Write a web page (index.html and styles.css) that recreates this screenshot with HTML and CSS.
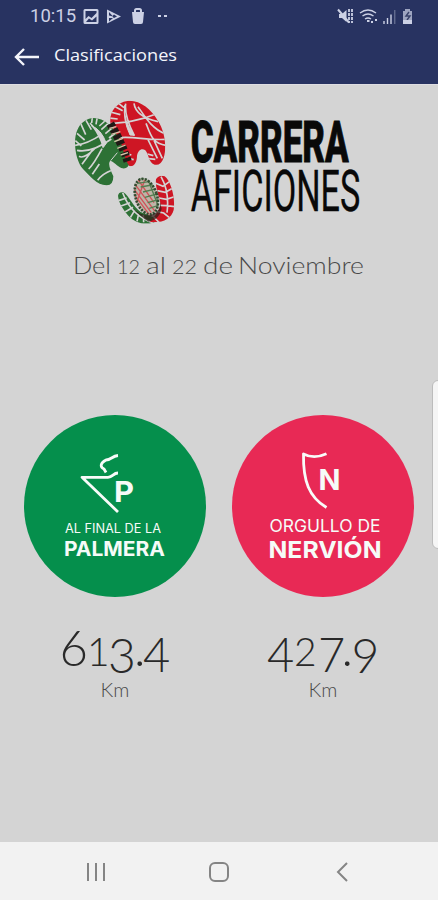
FILE: index.html
```html
<!DOCTYPE html>
<html lang="es">
<head>
<meta charset="utf-8">
<title>Clasificaciones</title>
<link rel="stylesheet" href="styles.css">
</head>
<body>
<div class="screen">
  <header class="top">
    <div class="status">
      <span class="clock">10:15</span>
      <svg class="notifications" width="88" height="20" viewBox="0 0 88 20">
        <path fill="currentColor" fill-rule="evenodd" d="M3 3h12q1.500 0 1.500 1.500v12q0 1.500-1.500 1.500H3q-1.500 0-1.500-1.500v-12Q1.500 3 3 3zM3.500 5v8l3-3 3 2 5-5V5zM4 16h10.500v-5.500l-4.500 4-3-2z"/>
        <path fill="currentColor" fill-rule="evenodd" d="M25 3.500 39 10.500 25 17.500zM27 6v3.500l4 1zM27 12v3.500l4-3.500zM32 8.500l-2 2 2 1.500 3-1.500z"/>
        <path fill="currentColor" d="M50 6h12l-1 10q0 2-2 2h-6q-2 0-2-2z"/>
        <path class="line" d="M53 7V4.500q0-1.500 1.500-1.500h3q1.500 0 1.500 1.500V7"/>
        <path fill="currentColor" d="M76 9h3v2h-3zM82 9h3v2h-3z"/>
      </svg>
      <svg class="signals" width="78" height="20" viewBox="0 0 78 20">
        <path fill="currentColor" d="M3 8h3l4.500-4v12L6 12H3z"/>
        <path class="line" d="M2 3.500 13 16.500"/>
        <path class="line dashed" d="M13 3v14M16 3v14"/>
        <path class="line thin" d="M24 7q8-6 16 0M26.500 10q5.500-4 11 0M29 13q3-2 6 0"/>
        <path fill="currentColor" d="M31 14h2.500v2H31zM35 15h2v2h-2zM39 13h2v2h-2z"/>
        <path class="line thin" d="M48 15v3M51.500 12v6M55 8.500V18"/>
        <path class="line faint" d="M58.800 4v14"/>
        <path fill="currentColor" opacity=".72" d="M67 5h2V3h5v2h2v13h-9z"/>
        <path class="bolt" d="m73 6-3 4h4l-3 4"/>
        <path fill="currentColor" d="M67 14h9v4h-9z"/>
      </svg>
    </div>
    <div class="bar">
      <svg width="26" height="20" viewBox="0 0 26 20"><path class="arrow" d="M25 10H2M10 2 2 10l8 8"/></svg>
      <h1><svg width="126" height="24" viewBox="0 0 126 24"><text x="1" y="16" textLength="123" lengthAdjust="spacingAndGlyphs">Clasificaciones</text></svg></h1>
    </div>
  </header>

  <main class="content">
    <svg class="logo" width="310" height="135" viewBox="0 0 930 405">
      <defs>
        <clipPath id="green-sole"><path d="M62 78C82 62 112 68 132 86C160 110 188 158 198 200Q192 225 172 219C160 214 149 199 139 197C130 207 140 226 148 244Q148 272 127 271C99 270 78 244 57 222C34 196 26 136 40 105Q47 87 62 78Z"/></clipPath>
        <clipPath id="red-sole"><path d="M139 84C136 49 158 23 190 18C226 14 261 42 282 78C303 109 309 159 299 188Q290 213 272 209C254 204 255 179 244 166C233 157 222 166 219 182C219 203 209 217 196 213C179 190 180 158 164 130Z"/></clipPath>
        <clipPath id="small-green"><path d="M162 302Q164 290 178 292C195 302 208 337 230 351L286 374C256 393 218 389 193 362C176 342 164 323 162 302Z"/></clipPath>
        <clipPath id="small-red"><path d="M276 253Q285 238 302 244C320 257 335 309 329 345C322 372 296 385 258 381C268 365 296 343 287 314C280 291 274 273 276 253Z"/></clipPath>
        <clipPath id="small-mid"><ellipse cx="247" cy="305" rx="34" ry="57" transform="rotate(-18 247 305)"/></clipPath>
      </defs>
      <g clip-path="url(#green-sole)">
        <path fill="#2d7135" d="M20 50h190v240H20z"/>
        <path class="tread" d="M78 84C94 99 109 130 119 155M33 151C61 148 85 137 113 118M39 166C69 172 107 157 142 132M45 184C58 192 76 177 92 161M74 222C88 209 99 189 114 161M101 256C111 242 127 232 143 226M50 85l15 34M66 76l16 28M39 115l23 20M34 137l18 16M54 208l32-44M85 238l21-31M132 86l-20 18M142 101l-18 15M126 75l-20 18M100 66l-4 22M85 67l-2 17M153 115l-18 14"/>
        <path class="tread wide" d="M82 92Q110 113 117 158L127 145Q112 103 82 92ZM140 197l20-24"/>
      </g>
      <g clip-path="url(#red-sole)">
        <path fill="#ce1624" d="M125 0h190v230H125z"/>
        <path class="tread" d="M137 86C174 83 218 81 276 57M153 130C198 120 245 137 306 133M185 26C181 57 193 87 211 122M210 25C214 55 242 71 282 80M222 35C243 65 263 101 303 116M246 85C258 113 263 146 306 151M251 132l29 58M270 136l25 54M202 180l-20-6M209 194l-19-4M250 177l18 5M254 191l20 2M139 51l30 8M151 34l25 13M161 23l19 15M136 69l25 3"/>
        <path class="tread wide" d="M182 31Q177 79 211 121L198 120Q176 73 182 31Z"/>
      </g>
      <path class="overlap" d="M139 86Q171 139 191 199"/>
      <path class="overlap-cuts" d="M136 100l21-5M142 118l27-8M151 140l26-10M160 160l25-10M170 180l22-7"/>
      <g clip-path="url(#small-green)">
        <path fill="#2d7135" d="M155 280h145v115H155z"/>
        <path class="tread" d="M163 317l25-8M171 333l27-10M183 351l24-14M199 368l13-22M219 379l5-23M239 382l-1-22M176 293q25 68 92 91"/>
      </g>
      <g clip-path="url(#small-red)">
        <path fill="#ce1624" d="M250 235h90v155h-90z"/>
        <path class="tread" d="M291 245q26 45 18 108M275 265l22 9 20-15M280 287l24 5 23-13M285 309l22 4 24-8M287 331l19 1 26 3M280 350l19 4 20 16M269 366l20 20"/>
      </g>
      <g clip-path="url(#small-mid)">
        <path fill="#bdb5a7" d="M200 240h100v125H200z"/>
        <path class="mesh red" d="M207 278l55 75M211 265l62 84M213 302l43 57M222 254l48 69M214 333l28-77"/>
        <path class="mesh green" d="M218 251h33l38 98M220 265l54-8M230 276l50-9M237 291l50-12M243 307l48-14M251 323l39-11M256 340l36-12"/>
      </g>
      <ellipse class="mid-edge" cx="247" cy="305" rx="32" ry="55" transform="rotate(-18 247 305)"/>
      <path class="dark" d="M204 337q32 34 65 19 23-10 19-36l5 22q-8 33-39 38-26-15-50-43z"/>
      <text class="name heavy" x="380" y="201" textLength="474" lengthAdjust="spacingAndGlyphs">CARRERA</text>
      <text class="name" x="380" y="348" textLength="509" lengthAdjust="spacingAndGlyphs">AFICIONES</text>
    </svg>

    <svg class="dates" width="300" height="36" viewBox="0 0 300 36">
      <text y="25"><tspan x="4" textLength="38" lengthAdjust="spacingAndGlyphs">Del</tspan><tspan class="old" x="48" textLength="23" lengthAdjust="spacingAndGlyphs">12</tspan><tspan x="77" textLength="20" lengthAdjust="spacingAndGlyphs">al</tspan><tspan class="old" x="103" textLength="25" lengthAdjust="spacingAndGlyphs">22</tspan><tspan x="134" textLength="30" lengthAdjust="spacingAndGlyphs">de</tspan><tspan x="169" textLength="126" lengthAdjust="spacingAndGlyphs">Noviembre</tspan></text>
    </svg>

    <section class="teams">
      <article class="team">
        <svg class="badge palmera" width="182" height="182" viewBox="0 0 182 182">
          <path class="stroke" d="M94 40.500C88 41 87 45 82 45C76 48 76 52 80 54L82 57.500M94 58C89 58 89 62.300 84 62.300H58L94 97"/>
          <text class="strong" x="90" y="87" font-size="29" textLength="20" lengthAdjust="spacingAndGlyphs">P</text>
          <text x="41" y="117.500" font-size="13.500" textLength="96" lengthAdjust="spacingAndGlyphs">AL FINAL DE LA</text>
          <text class="strong" x="40" y="140.500" font-size="20" textLength="101" lengthAdjust="spacingAndGlyphs">PALMERA</text>
        </svg>
        <svg class="score" width="182" height="54" viewBox="0 0 182 54">
          <text><tspan x="35.500" y="46" font-size="49">6</tspan><tspan x="63" y="46" font-size="39">1</tspan><tspan x="84" y="52.500" font-size="48">3</tspan><tspan x="110" y="46" font-size="49">.</tspan><tspan x="119" y="52" font-size="47">4</tspan></text>
        </svg>
        <div class="unit">Km</div>
      </article>
      <article class="team">
        <svg class="badge nervion" width="182" height="182" viewBox="0 0 182 182">
          <path class="stroke" d="M94.500 38.800Q82 44.500 71.500 39C71 66 77 82 94.500 92.500"/>
          <text class="strong" x="86.500" y="74.500" font-size="29" textLength="22" lengthAdjust="spacingAndGlyphs">N</text>
          <text x="37.500" y="117" font-size="17.500" textLength="111" lengthAdjust="spacingAndGlyphs">ORGULLO DE</text>
          <text class="strong" x="36.500" y="143.300" font-size="23.500" textLength="113" lengthAdjust="spacingAndGlyphs">NERVIÓN</text>
        </svg>
        <svg class="score" width="182" height="54" viewBox="0 0 182 54">
          <text><tspan x="35" y="52" font-size="47">4</tspan><tspan x="62" y="46" font-size="39">2</tspan><tspan x="86" y="52" font-size="47">7</tspan><tspan x="109.500" y="46" font-size="49">.</tspan><tspan x="119.500" y="52.500" font-size="48">9</tspan></text>
        </svg>
        <div class="unit">Km</div>
      </article>
    </section>
    <div class="edge-handle"></div>
  </main>

  <nav class="nav">
    <svg width="20" height="20" viewBox="0 0 20 20"><path d="M2 1v18M10 1v18M18 1v18"/></svg>
    <svg width="20" height="20" viewBox="0 0 20 20"><rect x="1" y="1" width="18" height="18" rx="5"/></svg>
    <svg width="20" height="20" viewBox="0 0 20 20"><path d="M15 1 6 10l9 9"/></svg>
  </nav>
</div>
</body>
</html>
```
FILE: styles.css
```css
* { box-sizing: border-box; }
body { margin: 0; background: #d4d4d4; font-family: Lato, "Open Sans", sans-serif; }
svg { display: block; flex: none; }
.screen { width: 438px; height: 900px; display: flex; flex-direction: column; overflow: hidden; }

.top { height: 84px; flex: none; background: #283361; color: #ccd1e5; }
.status { height: 30px; display: flex; align-items: center; padding: 2px 24px 0 30px; }
.clock { width: 52px; font: 400 18.5px/22px Roboto, sans-serif; }
.signals { margin-left: auto; }
.line { fill: none; stroke: currentColor; stroke-width: 2; }
.thin { stroke-width: 1.4; }
.faint { stroke-width: 1; opacity: .5; }
.dashed { stroke-dasharray: 3 1; stroke-width: 1.8; }
.bolt { fill: none; stroke: #384269; stroke-width: 1.4; }
.bar { height: 54px; display: flex; align-items: center; gap: 13px; padding: 0 14px; color: #f4f5fb; }
.bar h1 { margin: 0; font: 500 17px/24px "Open Sans", sans-serif; }
.bar text { fill: currentColor; }
.arrow { fill: none; stroke: currentColor; stroke-width: 2.4; }

.content { position: relative; flex: 1; display: flex; flex-direction: column; align-items: center; background: #d4d4d4; border-top: 1px solid #dedde2; }
.logo { margin-top: 10px; }
.tread { fill: none; stroke: #d4d4d4; stroke-width: 5; }
.wide { fill: #d4d4d4; stroke-width: 3; }
.overlap { fill: none; stroke: #201915; stroke-width: 25; stroke-dasharray: 13 6; }
.overlap-cuts { fill: none; stroke: #d7c3a8; stroke-width: 4; }
.mesh { fill: none; stroke-width: 4; }
.mesh.red { stroke: #d15259; }
.mesh.green { stroke: #527d50; }
.mid-edge { fill: none; stroke: #324c31; stroke-width: 8; stroke-dasharray: 6 4; }
.dark { fill: #302019; opacity: .75; }
.name { font: 400 173px Roboto, sans-serif; fill: #090909; stroke: #090909; stroke-width: 1; }
.name.heavy { font-weight: 800; stroke-width: 3; }

.dates { margin-top: 19px; }
.dates text { font-size: 24px; fill: #4a4a4a; font-weight: 300; }
.dates .old { font-size: 19.5px; }
.teams { margin-top: 130px; width: 390px; display: flex; justify-content: space-between; }
.team { display: flex; flex-direction: column; align-items: center; }
.badge { border-radius: 50%; }
.badge text { font-family: Inter, sans-serif; fill: #f6fbf8; font-weight: 400; }
.badge .strong { font-weight: 700; }
.palmera { background: #058f4c; }
.nervion { background: #e82955; }
.stroke { fill: none; stroke: #f8fbf9; stroke-width: 2.8; stroke-linejoin: round; }
.score { margin-top: 23px; }
.score text { font-weight: 300; fill: #292929; }
.unit { margin-top: 3px; font-size: 20px; line-height: 24px; font-weight: 300; color: #494949; }
.edge-handle { position: absolute; right: -6px; top: 295px; width: 12px; height: 169px; border: 1px solid #bcbcbc; border-radius: 6px; background: #f5f5f5; }

.nav { height: 58px; flex: none; display: flex; align-items: center; justify-content: center; gap: 103px; padding-top: 2px; background: #f2f2f2; }
.nav path, .nav rect { fill: none; stroke: #858585; stroke-width: 2; }
```
